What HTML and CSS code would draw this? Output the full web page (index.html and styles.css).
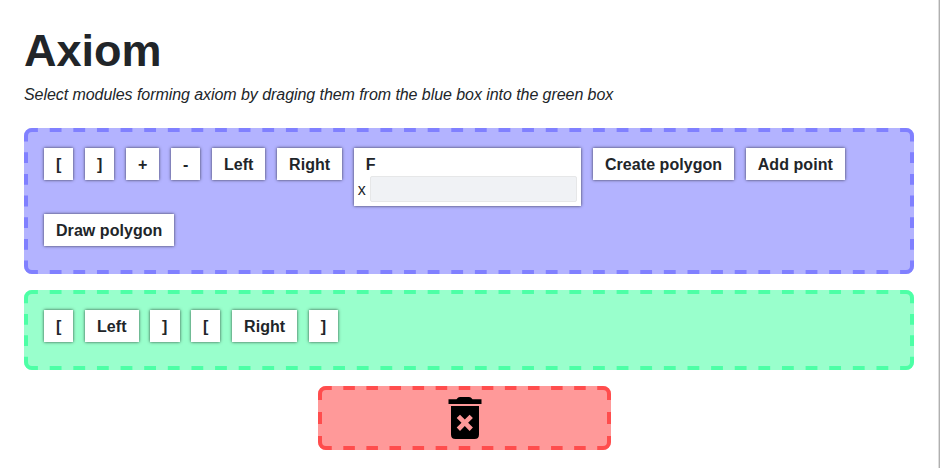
FILE: index.html
```
<!DOCTYPE html>
<html lang="en">
<head>
<meta charset="utf-8">
<title>Axiom</title>
<link rel="stylesheet" href="styles.css">
</head>
<body>
<main class="panel">
  <h1 class="title">Axiom</h1>
  <p class="hint">Select modules forming axiom by draging them from the blue box into the green box</p>
  <section class="box source">
    <svg class="outline" width="890" height="146">
      <path class="dash" pathLength="37" d="M8 2H882"/>
      <path class="dash" pathLength="37" d="M8 144H882"/>
      <path class="dash" pathLength="6" d="M2 8V138"/>
      <path class="dash" pathLength="6" d="M888 8V138"/>
      <path d="M2 8A6 6 0 0 1 8 2M882 2A6 6 0 0 1 888 8M888 138A6 6 0 0 1 882 144M8 144A6 6 0 0 1 2 138"/>
    </svg>
    <div class="module">[</div>
    <div class="module">]</div>
    <div class="module">+</div>
    <div class="module">-</div>
    <div class="module">Left</div>
    <div class="module">Right</div>
    <div class="module with-params">
      <div class="name">F</div>
      <label class="param">x <input class="value" type="text" disabled></label>
    </div>
    <div class="module">Create polygon</div>
    <div class="module">Add point</div>
    <div class="module">Draw polygon</div>
  </section>
  <section class="box axiom">
    <svg class="outline" width="890" height="80">
      <path class="dash" pathLength="37" d="M8 2H882"/>
      <path class="dash" pathLength="37" d="M8 78H882"/>
      <path class="dash" pathLength="3" d="M2 8V72"/>
      <path class="dash" pathLength="3" d="M888 8V72"/>
      <path d="M2 8A6 6 0 0 1 8 2M882 2A6 6 0 0 1 888 8M888 72A6 6 0 0 1 882 78M8 78A6 6 0 0 1 2 72"/>
    </svg>
    <div class="module">[</div>
    <div class="module">Left</div>
    <div class="module">]</div>
    <div class="module">[</div>
    <div class="module">Right</div>
    <div class="module">]</div>
  </section>
  <section class="box trash">
    <svg class="outline" width="293" height="64">
      <path class="dash" pathLength="12" d="M8 2H285"/>
      <path class="dash" pathLength="12" d="M8 62H285"/>
      <path class="dash" pathLength="2" d="M2 8V56"/>
      <path class="dash" pathLength="2" d="M291 8V56"/>
      <path d="M2 8A6 6 0 0 1 8 2M285 2A6 6 0 0 1 291 8M291 56A6 6 0 0 1 285 62M8 62A6 6 0 0 1 2 56"/>
    </svg>
    <svg class="bin" width="34" height="42" viewBox="0 0 34 42">
      <path d="M.5 2.3H8.500Q10 0 12 0H21Q23 0 24.500 2.300H33.500V7H.5z"/>
      <path fill-rule="evenodd" d="M3 9H31V37.500Q31 42 26.500 42H7.500Q3 42 3 37.500zM12 17.700L8.700 21L13.500 25.800L8.700 30.600L12 33.900L16.800 29.100L21.600 33.900L24.900 30.600L20.100 25.800L24.900 21L21.600 17.700L16.800 22.500z"/>
    </svg>
  </section>
</main>
</body>
</html>
```
FILE: styles.css
```
* {
  box-sizing: border-box;
}

body {
  margin: 0;
  background: #fff;
  color: #212529;
  font: 16px/24px "Liberation Sans", Arial, sans-serif;
}

.panel {
  height: 468px;
  padding: 24px 24px 0;
  border-right: 1px solid #b0b0b0;
  box-shadow: inset -1px 0 #dedede;
  overflow: hidden;
}

.title {
  margin: 0 0 5px;
  font-size: 45px;
  line-height: 54px;
}

.hint {
  margin: 0 0 21px;
  font-style: italic;
  letter-spacing: -.06px;
}

.box {
  position: relative;
  display: flex;
  flex-wrap: wrap;
  align-items: flex-start;
  align-content: flex-start;
  gap: 8px 11.6px;
  margin-bottom: 16px;
  padding: 20px;
  border-radius: 8px;
}

.outline {
  position: absolute;
  inset: 0;
  fill: none;
  stroke: currentColor;
  stroke-width: 4;
}

.dash {
  stroke-dasharray: .5;
  stroke-dashoffset: .25;
}

.source {
  width: 890px;
  height: 146px;
  background: #b3b3ff;
  color: #8080ff;
}

.axiom {
  width: 890px;
  height: 80px;
  background: #99ffcc;
  color: #4dffa6;
}

.trash {
  justify-content: center;
  width: 293px;
  height: 64px;
  margin: 0 0 0 294px;
  padding: 11px 0;
  background: #ff9999;
  color: #ff4d4d;
}

.module {
  height: 32px;
  padding: 5px 12px 3px;
  background: #fff;
  box-shadow: 0 0 3px rgba(0, 0, 0, .7);
  color: #212529;
  font-weight: bold;
  letter-spacing: .05px;
}

.with-params {
  width: 227.6px;
  height: 58px;
  padding: 5px 4px 4px;
}

.name {
  height: 23px;
  padding-left: 8px;
}

.param {
  display: flex;
  gap: 4px;
  font-weight: normal;
  line-height: 28px;
}

.value {
  flex: 1;
  min-width: 0;
  height: 26px;
  border: 1px solid #e6e7e8;
  border-radius: 2px;
  background: #f0f2f5;
}

.bin {
  fill: #000;
}
```
